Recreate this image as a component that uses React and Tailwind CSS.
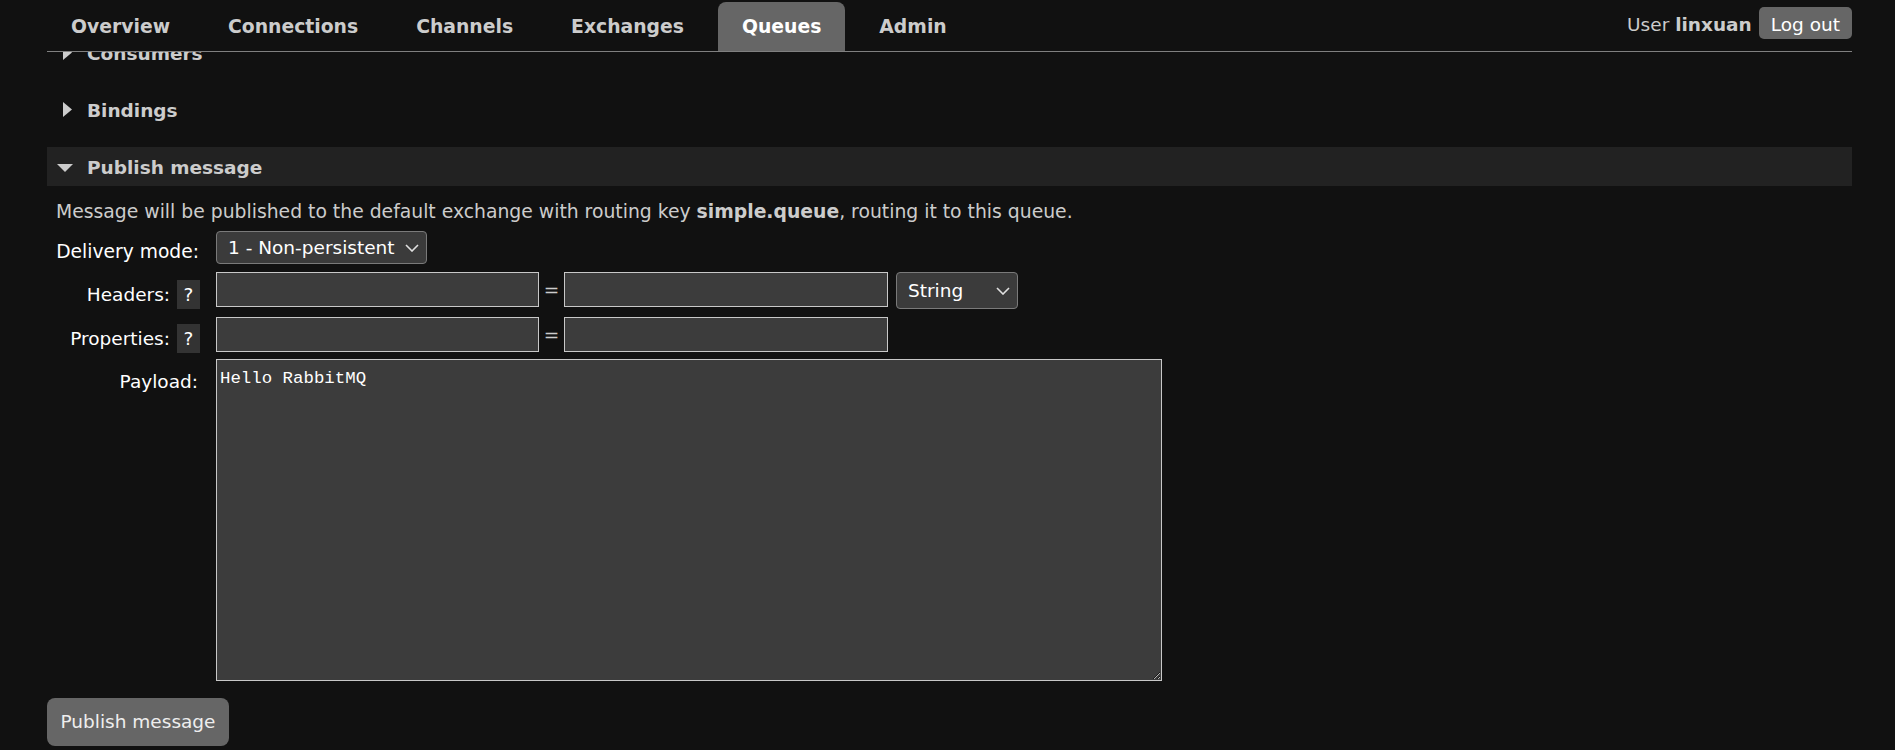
import React from "react";

function Chevron() {
  return (
    <svg
      className="pointer-events-none absolute right-[8px] top-1/2 -translate-y-1/2"
      width="14"
      height="8"
      viewBox="0 0 14 8"
      fill="none"
    >
      <path d="M1 1 L7 7 L13 1" stroke="#e0e0e0" strokeWidth="1.6" />
    </svg>
  );
}

function Select({ w, h, value, options }) {
  return (
    <div className={`relative ${w} ${h}`}>
      <select
        defaultValue={value}
        className="h-full w-full appearance-none rounded-[4px] border border-[#7a7a7a] bg-[#3b3b3b] pl-[11px] text-white outline-none"
      >
        {options.map((o) => (
          <option key={o}>{o}</option>
        ))}
      </select>
      <Chevron />
    </div>
  );
}

function Collapsed({ title, extra }) {
  return (
    <div className={`flex h-[39px] pt-[2px] leading-[37px] font-bold text-[#cccccc] ${extra}`}>
      <svg className="ml-[16px] mt-[10px]" width="9" height="15" viewBox="0 0 9 15">
        <path d="M0 0 L9 7.5 L0 15 Z" fill="#cccccc" />
      </svg>
      <span className="ml-[15px]">{title}</span>
    </div>
  );
}

export default function App() {
  const tabs = ["Overview", "Connections", "Channels", "Exchanges", "Queues", "Admin"];
  return (
    <div className="min-h-screen bg-[#111111] pl-[47px] pr-[43px] font-['DejaVu_Sans',sans-serif] text-[18.5px] text-[#cccccc]">
      <div className="relative z-10 flex h-[52px] border-b border-[#808080] bg-[#111111]">
        <ul className="flex gap-[10px] pt-[2px]">
          {tabs.map((t) => (
            <li
              key={t}
              className={
                t === "Queues"
                  ? "h-[49px] rounded-t-[8px] bg-[#666666] px-[24px] text-[18.8px] font-bold leading-[49px] text-white"
                  : "h-[49px] px-[24px] text-[18.8px] font-bold leading-[49px] text-[#cccccc]"
              }
            >
              {t}
            </li>
          ))}
        </ul>
        <div className="ml-auto flex items-start pt-[7px]">
          <span className="pt-[3px] leading-[29px] text-[#cccccc]">
            User <b className="font-bold">linxuan</b>
          </span>
          <span className="ml-[7px] h-[32px] rounded-[5px] bg-[#666666] px-[12px] pt-[3px] leading-[29px] text-white">
            Log out
          </span>
        </div>
      </div>

      <div className="h-[698px] overflow-hidden">
        <Collapsed title="Consumers" extra="-mt-[19px]" />
        <Collapsed title="Bindings" extra="mt-[18px]" />

        <div className="mt-[18px] flex h-[39px] bg-[#222222] pt-[2px] leading-[37px] font-bold text-[#cccccc]">
          <svg className="ml-[10px] mt-[15px]" width="16" height="8" viewBox="0 0 16 8">
            <path d="M0 0 L16 0 L8 8 Z" fill="#cccccc" />
          </svg>
          <span className="ml-[14px]">Publish message</span>
        </div>

        <p className="mt-[14px] pl-[9px] text-[18.8px] leading-[24px] text-[#cccccc]">
          Message will be published to the default exchange with routing key{" "}
          <b className="font-bold">simple.queue</b>, routing it to this queue.
        </p>

        {/* Delivery mode */}
        <div className="mt-[7px] flex">
          <div className="flex w-[169px] shrink-0 justify-end pr-[17px] pt-[9px] text-[18.7px] leading-[24px] text-white">
            Delivery mode:
          </div>
          <Select w="w-[211px]" h="h-[33px]" value="1 - Non-persistent" options={["1 - Non-persistent", "2 - Persistent"]} />
        </div>

        {/* Headers */}
        <div className="mt-[8px] flex">
          <div className="flex w-[169px] shrink-0 items-start justify-end pr-[16px] pt-[8px] text-white">
            <span className="leading-[29px]">Headers:</span>
            <span className="ml-[7px] h-[29px] w-[23px] bg-[#333333] text-center leading-[29px] text-white">?</span>
          </div>
          <div className="flex items-start">
            <input className="h-[35px] w-[323px] border border-[#c8c8c8] bg-[#3c3c3c] text-white outline-none" />
            <span className="flex h-[35px] w-[25px] items-center justify-center text-[#cccccc]">=</span>
            <input className="h-[35px] w-[324px] border border-[#c8c8c8] bg-[#3c3c3c] text-white outline-none" />
            <div className="ml-[8px]">
              <Select w="w-[122px]" h="h-[37px]" value="String" options={["String", "Number", "Boolean"]} />
            </div>
          </div>
        </div>

        {/* Properties */}
        <div className="mt-[8px] flex">
          <div className="flex w-[169px] shrink-0 items-start justify-end pr-[16px] pt-[7px] text-white">
            <span className="leading-[29px]">Properties:</span>
            <span className="ml-[7px] h-[29px] w-[23px] bg-[#333333] text-center leading-[29px] text-white">?</span>
          </div>
          <div className="flex items-start">
            <input className="h-[35px] w-[323px] border border-[#c8c8c8] bg-[#3c3c3c] text-white outline-none" />
            <span className="flex h-[35px] w-[25px] items-center justify-center text-[#cccccc]">=</span>
            <input className="h-[35px] w-[324px] border border-[#c8c8c8] bg-[#3c3c3c] text-white outline-none" />
          </div>
        </div>

        {/* Payload */}
        <div className="mt-[6px] flex">
          <div className="flex w-[169px] shrink-0 justify-end pr-[18px] pt-[11px] leading-[24px] text-white">
            Payload:
          </div>
          <textarea
            defaultValue="Hello RabbitMQ"
            className="h-[322px] w-[946px] border border-[#c8c8c8] bg-[#3c3c3c] pl-[3px] pt-[8px] font-['Liberation_Mono',monospace] text-[17.4px] leading-[22px] text-white outline-none"
          />
        </div>

        <button className="mt-[17px] h-[48px] w-[182px] rounded-[8px] bg-[#666666] text-[#eeeeee]">
          Publish message
        </button>
      </div>
    </div>
  );
}
